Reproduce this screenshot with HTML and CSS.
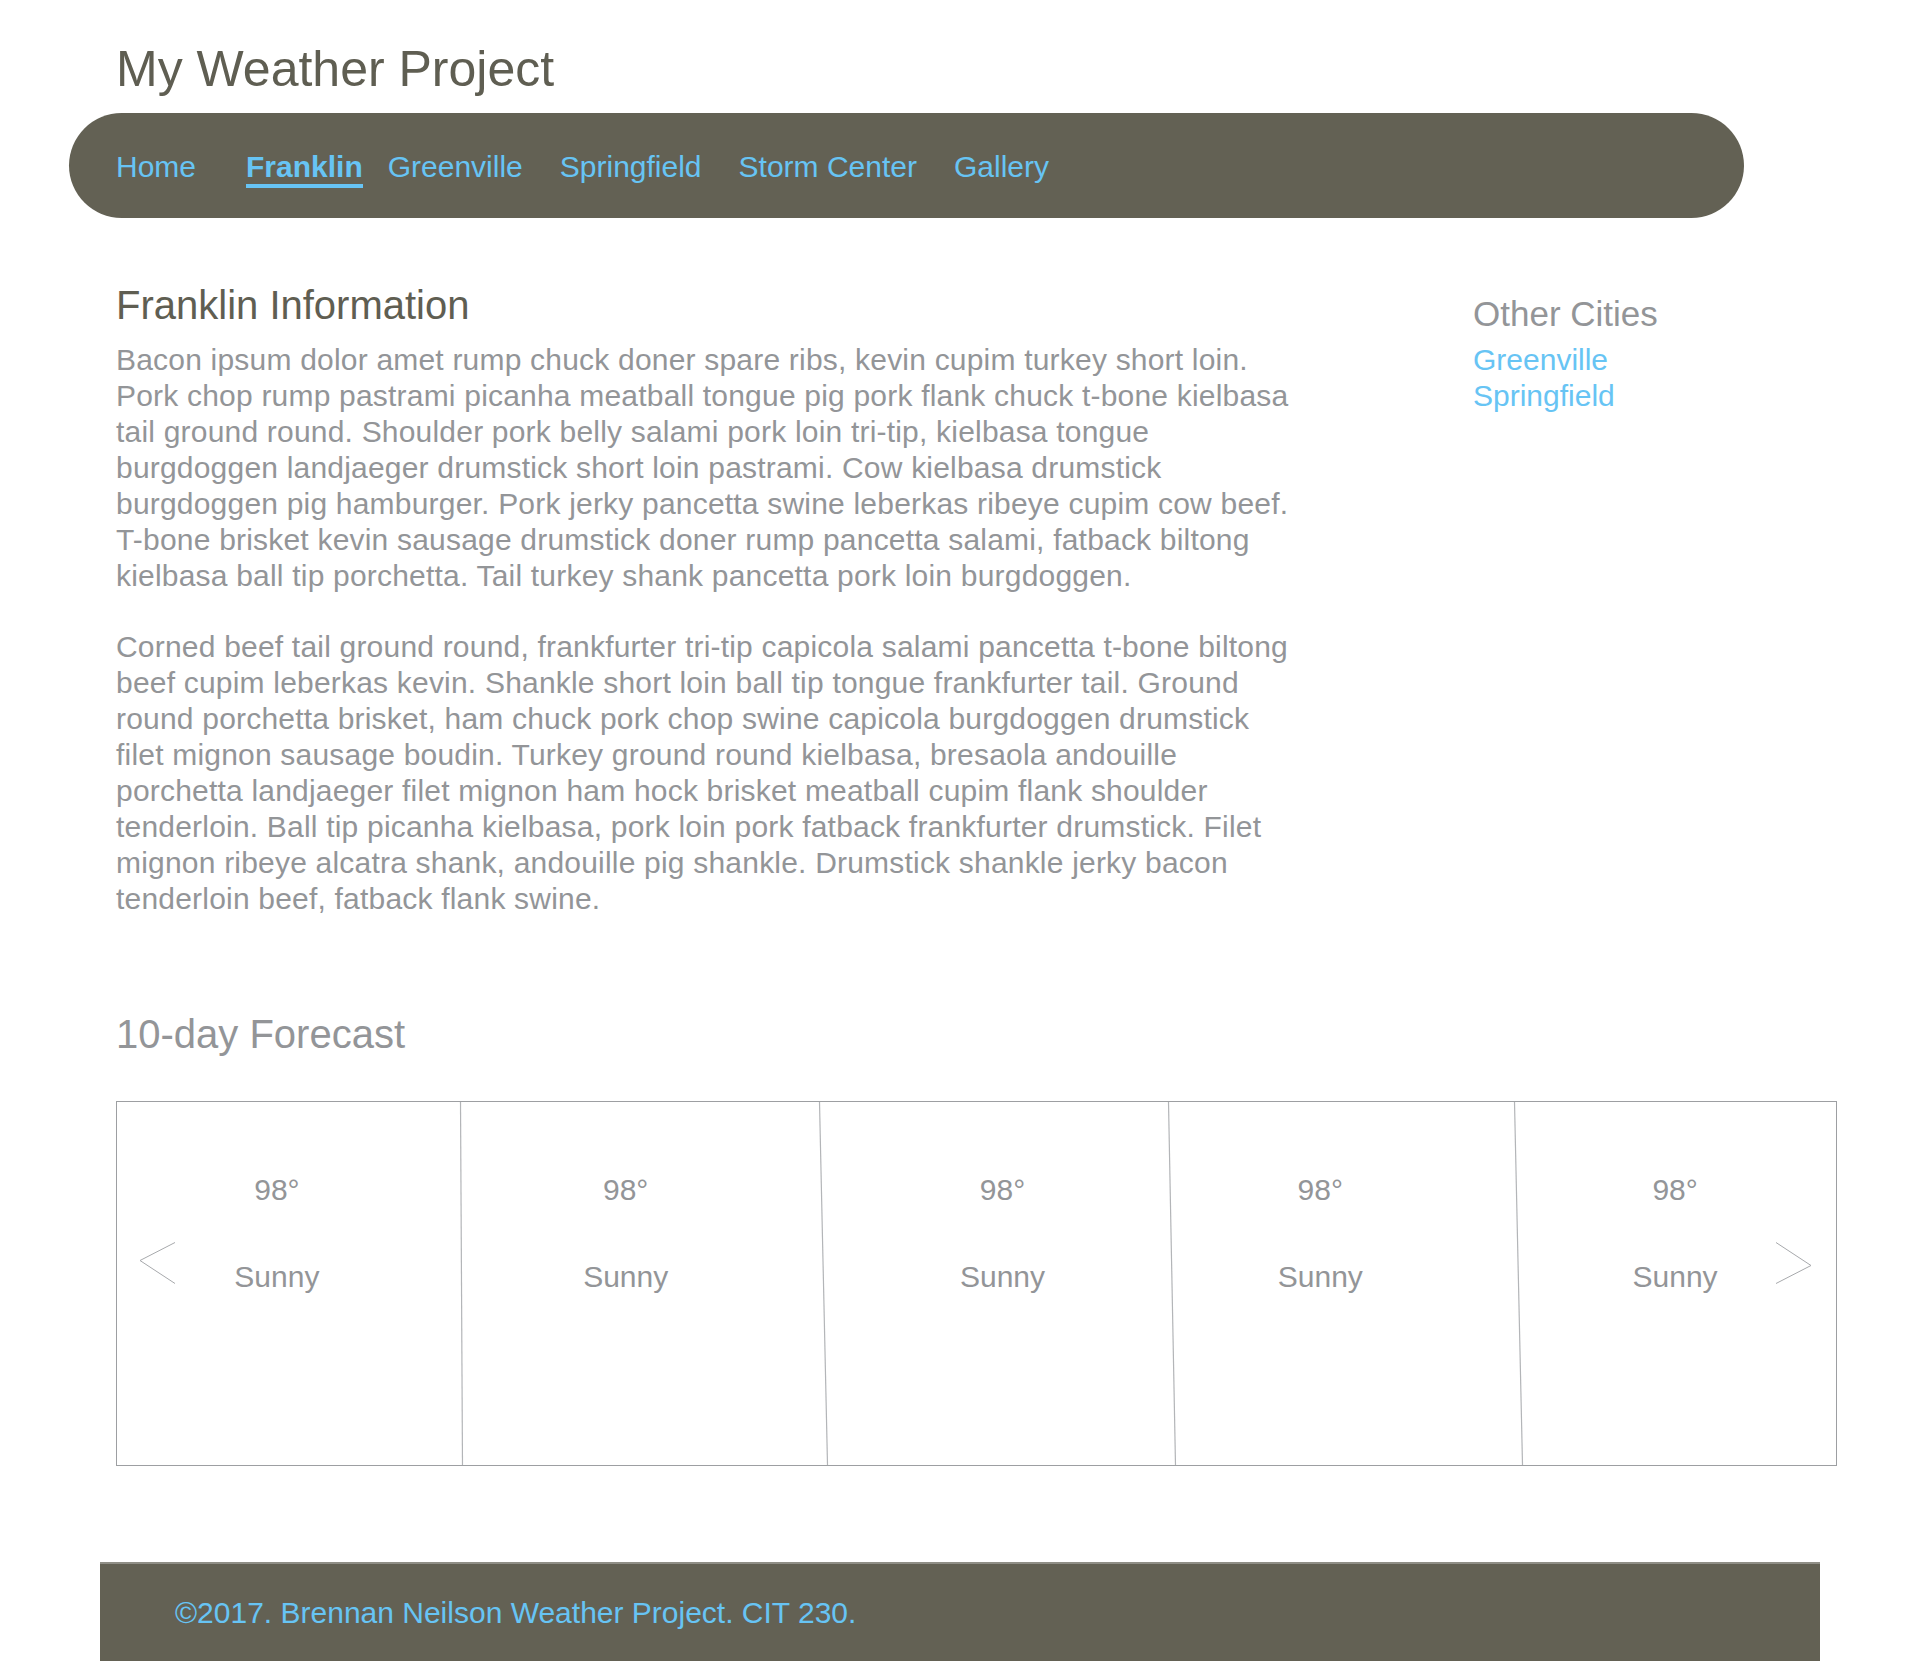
FILE: index.html
```html
<!DOCTYPE html>
<html lang="en">
<head>
<meta charset="utf-8">
<title>Franklin | My Weather Project</title>
<link rel="stylesheet" href="styles.css">
</head>
<body>
<header class="site-header">
  <h1 class="site-title">My Weather Project</h1>
  <nav class="main-nav">
    <ul class="nav-list">
      <li><a class="nav-link" href="#">Home</a></li>
      <li><a class="nav-link active" href="#">Franklin</a></li>
      <li><a class="nav-link" href="#">Greenville</a></li>
      <li><a class="nav-link" href="#">Springfield</a></li>
      <li><a class="nav-link" href="#">Storm Center</a></li>
      <li><a class="nav-link" href="#">Gallery</a></li>
    </ul>
  </nav>
</header>

<main class="content">
  <div class="info-grid">
    <article class="city-info">
      <h2 class="section-title dark">Franklin Information</h2>
      <p class="body-text">Bacon ipsum dolor amet rump chuck doner spare ribs, kevin cupim turkey short loin. Pork chop rump pastrami picanha meatball tongue pig pork flank chuck t-bone kielbasa tail ground round. Shoulder pork belly salami pork loin tri-tip, kielbasa tongue burgdoggen landjaeger drumstick short loin pastrami. Cow kielbasa drumstick burgdoggen pig hamburger. Pork jerky pancetta swine leberkas ribeye cupim cow beef. T-bone brisket kevin sausage drumstick doner rump pancetta salami, fatback biltong kielbasa ball tip porchetta. Tail turkey shank pancetta pork loin burgdoggen.</p>
      <p class="body-text">Corned beef tail ground round, frankfurter tri-tip capicola salami pancetta t-bone biltong beef cupim leberkas kevin. Shankle short loin ball tip tongue frankfurter tail. Ground round porchetta brisket, ham chuck pork chop swine capicola burgdoggen drumstick filet mignon sausage boudin. Turkey ground round kielbasa, bresaola andouille porchetta landjaeger filet mignon ham hock brisket meatball cupim flank shoulder tenderloin. Ball tip picanha kielbasa, pork loin pork fatback frankfurter drumstick. Filet mignon ribeye alcatra shank, andouille pig shankle. Drumstick shankle jerky bacon tenderloin beef, fatback flank swine.</p>
    </article>
    <aside class="other-cities">
      <h3 class="aside-title">Other Cities</h3>
      <ul class="city-list">
        <li><a class="city-link" href="#">Greenville</a></li>
        <li><a class="city-link" href="#">Springfield</a></li>
      </ul>
    </aside>
  </div>

  <section class="forecast">
    <h2 class="section-title light">10-day Forecast</h2>
    <div class="carousel">
      <svg class="dividers" viewBox="0 0 1719 363" preserveAspectRatio="none" aria-hidden="true">
        <line x1="343.5" y1="0" x2="345.5" y2="363"/>
        <line x1="702.5" y1="0" x2="710.5" y2="363"/>
        <line x1="1051.5" y1="0" x2="1058.5" y2="363"/>
        <line x1="1397.5" y1="0" x2="1405.5" y2="363"/>
      </svg>
      <div class="day"><span class="temp">98°</span><span class="cond">Sunny</span></div>
      <div class="day"><span class="temp">98°</span><span class="cond">Sunny</span></div>
      <div class="day"><span class="temp">98°</span><span class="cond">Sunny</span></div>
      <div class="day"><span class="temp">98°</span><span class="cond">Sunny</span></div>
      <div class="day"><span class="temp">98°</span><span class="cond">Sunny</span></div>
      <button class="arrow prev" aria-label="Previous">
        <svg viewBox="0 0 37 43"><polyline points="36,0.5 1,18.5 36,41.5"/></svg>
      </button>
      <button class="arrow next" aria-label="Next">
        <svg viewBox="0 0 37 43"><polyline points="1,0.5 36,23.5 1,41.5"/></svg>
      </button>
    </div>
  </section>
</main>

<footer class="site-footer">
  <p class="footer-text">©2017. Brennan Neilson Weather Project. CIT 230.</p>
</footer>
</body>
</html>
```

FILE: styles.css
```css
* { box-sizing: border-box; }

html, body {
  margin: 0;
  padding: 0;
  background: #ffffff;
}

body {
  font-family: "Liberation Sans", Arial, Helvetica, sans-serif;
  color: #939598;
}

ul { list-style: none; margin: 0; padding: 0; }
a { text-decoration: none; }

/* header */
.site-title {
  margin: 41px 0 0 116px;
  font-size: 50px;
  line-height: 56px;
  font-weight: normal;
  color: #5f5e52;
}

.main-nav {
  margin: 16px 0 0 69px;
  width: 1675px;
  height: 105px;
  border-radius: 53px;
  background: #636154;
  display: flex;
  align-items: center;
  padding-left: 47px;
}

.nav-list {
  display: flex;
  gap: 37px;
}

.nav-link {
  display: block;
  font-size: 30px;
  line-height: 34px;
  padding-top: 6px;
  border-bottom: 4px solid transparent;
  color: #67c4f4;
}

.nav-link.active {
  font-weight: bold;
  border-bottom-color: #67c4f4;
  margin-left: 13px;
  margin-right: -12px;
}

/* content */
.content {
  margin-left: 116px;
  width: 1721px;
}

.info-grid {
  margin-top: 65px;
  display: grid;
  grid-template-columns: 1184px 1fr;
  column-gap: 173px;
  align-items: start;
}

.section-title {
  margin: 0;
  font-size: 40px;
  line-height: 44px;
  font-weight: normal;
}

.section-title.dark { color: #5f5e52; }
.section-title.light { color: #939598; }

.body-text {
  margin: 15px 0 0;
  font-size: 30px;
  line-height: 36px;
  letter-spacing: 0.2px;
}

.body-text + .body-text { margin-top: 35px; }

.aside-title {
  margin: 11px 0 0;
  font-size: 35px;
  line-height: 40px;
  font-weight: normal;
  color: #939598;
}

.city-list {
  margin-top: 8px;
  font-size: 30px;
  line-height: 36px;
}

.city-link { color: #67c4f4; }

/* forecast */
.forecast { margin-top: 95px; }

.carousel {
  position: relative;
  margin-top: 45px;
  height: 365px;
  border: 1px solid #9d9fa2;
  display: grid;
  grid-template-columns: repeat(5, 1fr);
}

.dividers {
  position: absolute;
  left: 0;
  top: 0;
  width: 100%;
  height: 100%;
  pointer-events: none;
}

.dividers line {
  stroke: #b3b5b8;
  stroke-width: 1.2;
}

.day {
  display: flex;
  flex-direction: column;
  align-items: center;
  padding-top: 70px;
  font-size: 30px;
  line-height: 36px;
  color: #939598;
}

.day:nth-child(2) { padding-right: 24px; }
.day:nth-child(3) { padding-right: 14px; }
.day:nth-child(4) { padding-left: 52px; }
.day:nth-child(6) { padding-left: 22px; }

.cond { margin-top: 51px; }

.arrow {
  position: absolute;
  top: 140px;
  width: 37px;
  height: 43px;
  padding: 0;
  border: 0;
  background: none;
}

.arrow svg {
  display: block;
  width: 37px;
  height: 43px;
}

.arrow polyline {
  fill: none;
  stroke: #a7a9ac;
  stroke-width: 1;
}

.arrow.prev { left: 22px; }
.arrow.next { right: 24px; }

/* footer */
.site-footer {
  margin: 96px 0 0 100px;
  width: 1720px;
  height: 99px;
  background: #636154;
  border-top: 2px solid #8f8e86;
  padding: 31px 0 0 75px;
}

.footer-text {
  margin: 0;
  font-size: 30px;
  line-height: 36px;
  color: #67c4f4;
}
```
